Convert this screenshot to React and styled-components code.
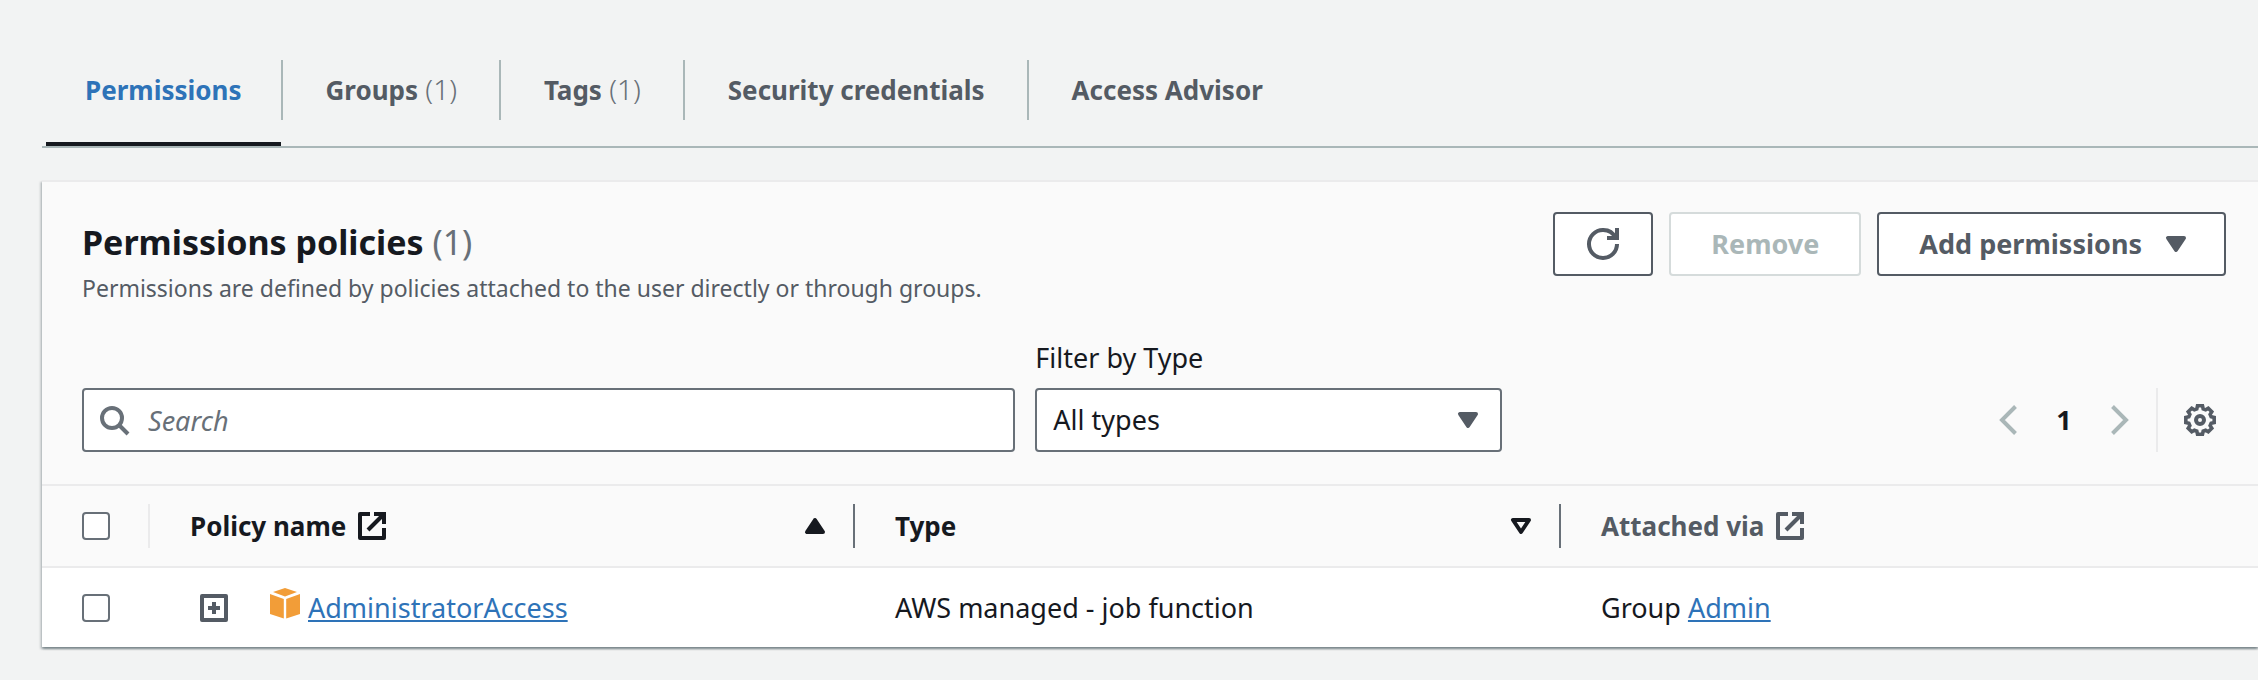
import React from "react";
import styled, { createGlobalStyle, css } from "styled-components";

const color = {
  page: "#f2f3f3",
  panel: "#fafafa",
  text: "#16191f",
  muted: "#545b64",
  subtle: "#687078",
  disabled: "#aab7b8",
  disabledBorder: "#d5dbdb",
  divider: "#ebebec",
  link: "#2e73b8",
};

const GlobalStyle = createGlobalStyle`
  *, *::before, *::after { box-sizing: border-box; }
  body {
    margin: 0;
    background: ${color.page};
    color: ${color.text};
    font-family: "Noto Sans", "Open Sans", sans-serif;
    font-size: 27px;
    line-height: 36px;
  }
  button, input, select { font: inherit; color: inherit; }
  button { cursor: pointer; }
`;

const Page = styled.main`
  padding: 60px 0 32px 42px;
`;

/* Tabs */

const TabList = styled.div`
  display: flex;
  padding-left: 4px;
  border-bottom: 2px solid ${color.disabled};
`;

const TabLabel = styled.span`
  display: block;
  padding: 12px 39px;
`;

const Tab = styled.button`
  padding: 0 0 22px;
  border: 0;
  border-bottom: 4px solid ${(p) => (p.$active ? color.text : "transparent")};
  background: none;
  color: ${(p) => (p.$active ? color.link : color.muted)};
  font-size: 26px;
  font-weight: 700;
  white-space: nowrap;

  &:not(:first-child) ${TabLabel} {
    padding: 12px 42px 12px 43px;
    border-left: 2px solid ${color.disabled};
  }
`;

const Count = styled.span`
  color: ${color.subtle};
  font-weight: 400;
`;

const TabCount = styled(Count)`
  font-size: 28px;
  font-weight: 300;
  line-height: 1;
`;

/* Panel */

const Panel = styled.section`
  margin-top: 32px;
  border-top: 2px solid ${color.divider};
  background: ${color.panel};
  box-shadow:
    0 2px 2px rgba(0, 28, 36, 0.3),
    2px 2px 2px rgba(0, 28, 36, 0.15),
    -2px 2px 2px rgba(0, 28, 36, 0.15);
`;

const PanelHeader = styled.header`
  display: flex;
  justify-content: space-between;
  align-items: flex-start;
  padding: 30px 32px 0 40px;
`;

const Title = styled.h2`
  margin: 0;
  font-size: 34px;
  line-height: 60px;
`;

const Description = styled.p`
  margin: 0;
  color: ${color.muted};
  font-size: 23px;
  line-height: 32px;
`;

const Actions = styled.div`
  display: flex;
  gap: 16px;
`;

const Button = styled.button`
  display: flex;
  align-items: center;
  justify-content: center;
  gap: 18px;
  height: 64px;
  padding: 0 ${(p) => (p.$menu ? 32 : 40)}px 0 40px;
  border: 2px solid ${color.muted};
  border-radius: 4px;
  background: #fff;
  color: ${color.muted};
  font-weight: 700;
  white-space: nowrap;

  ${(p) => p.$iconOnly && css`padding: 0 32px;`}

  &:disabled {
    border-color: ${color.disabledBorder};
    color: ${color.disabled};
    cursor: default;
  }
`;

const Toolbar = styled.div`
  display: flex;
  justify-content: space-between;
  align-items: flex-end;
  gap: 40px;
  padding: 36px 42px 32px 40px;
  border-bottom: 2px solid ${color.divider};
`;

const Filters = styled.div`
  display: grid;
  grid-template-columns: 2fr 1fr;
  align-items: end;
  gap: 20px;
  flex: 1;
  max-width: 1420px;
`;

const Field = styled.div`
  display: grid;
  gap: 12px;
`;

const ControlStack = styled.div`
  display: grid;
  align-items: center;
  color: ${(p) => p.$iconColor};

  & > * { grid-area: 1 / 1; }
  & > svg {
    justify-self: ${(p) => p.$iconSide};
    margin: 0 18px 0 16px;
    pointer-events: none;
    z-index: 1;
  }
`;

const controlBox = css`
  width: 100%;
  height: 64px;
  border: 2px solid ${color.subtle};
  border-radius: 4px;
  background: #fff;
  color: ${color.text};
`;

const SearchInput = styled.input`
  ${controlBox}
  padding: 0 16px 0 64px;

  &::placeholder {
    color: ${color.subtle};
    font-style: italic;
    opacity: 1;
  }
`;

const Select = styled.select`
  ${controlBox}
  appearance: none;
  padding: 0 60px 0 16px;
`;

const Pagination = styled.nav`
  display: flex;
  align-items: center;
  height: 64px;
`;

const IconButton = styled.button`
  display: flex;
  padding: 0;
  border: 0;
  background: none;
  color: ${color.muted};

  &:disabled { color: ${color.disabled}; cursor: default; }
`;

const PageNumber = styled.button`
  width: 80px;
  padding: 0;
  border: 0;
  background: none;
  font-weight: 700;
`;

const Preferences = styled.div`
  display: flex;
  align-items: center;
  align-self: stretch;
  margin-left: 20px;
  padding-left: 26px;
  border-left: 2px solid ${color.divider};
`;

/* Table */

const Table = styled.table`
  width: 100%;
  table-layout: fixed;
  border-collapse: collapse;
  text-align: left;
`;

const Column = styled.col`
  width: ${(p) => p.$width};
`;

const HeadCell = styled.th`
  padding: 18px 0;
  border-bottom: 2px solid ${color.divider};
  color: ${(p) => (p.$sortable ? color.text : color.muted)};
  font-size: 26px;
`;

const HeadContent = styled.div`
  display: flex;
  align-items: center;
  justify-content: space-between;
  height: 44px;
  padding: 0 22px 0 40px;
  border-right: 2px solid ${(p) => p.$edge || "transparent"};
`;

const HeadLabel = styled.span`
  display: flex;
  align-items: center;
  gap: 12px;
`;

const Cell = styled.td`
  height: 80px;
  padding: 0 20px 0 40px;
  background: #fff;
`;

const PolicyName = styled.div`
  display: flex;
  align-items: center;
  gap: 8px;
  padding-left: 10px;
`;

const ExpandButton = styled(IconButton)`
  margin-right: 34px;
`;

const Link = styled.a`
  color: ${color.link};
  text-decoration: underline;
  text-decoration-thickness: 2px;
  text-underline-offset: 2px;
  text-decoration-skip-ink: none;
`;

const Checkbox = styled.input.attrs({ type: "checkbox" })`
  appearance: none;
  display: block;
  width: 28px;
  height: 28px;
  margin: 0;
  border: 2px solid ${color.subtle};
  border-radius: 4px;
  background: #fff;

  &:checked { background: ${color.link}; }
`;

/* Icons */

const Svg = styled.svg`
  display: block;
  flex: none;
  fill: none;
  stroke: currentColor;
  stroke-width: 4;
`;

const Icon = ({ size = 32, children }) => (
  <Svg width={size} height={size} viewBox={`0 0 ${size} ${size}`} aria-hidden="true">
    {children}
  </Svg>
);

const RefreshIcon = () => (
  <Icon>
    <path d="M20 10h10V0" />
    <path d="M30 16a13.9 13.9 0 0 1-14 14 13.9 13.9 0 0 1-14-14 13.9 13.9 0 0 1 14-14 13.7 13.7 0 0 1 12.6 8" />
  </Icon>
);

const CaretDown = ({ filled }) => (
  <Icon>
    <path d="M8 10h16l-8 12z" fill={filled ? "currentColor" : "none"} strokeLinejoin="round" />
  </Icon>
);

const CaretUp = () => (
  <Icon>
    <path d="M8 22h16l-8-12z" fill="currentColor" strokeLinejoin="round" />
  </Icon>
);

const SearchIcon = () => (
  <Icon>
    <circle cx="14" cy="14" r="10" />
    <path d="M21 21l9 9" />
  </Icon>
);

const ChevronLeft = () => (
  <Icon>
    <path d="M23.5 2.5L10 16l13.5 13.5" />
  </Icon>
);

const ChevronRight = () => (
  <Icon>
    <path d="M8.5 2.5L22 16 8.5 29.5" />
  </Icon>
);

/* Eight teeth, each a flat top between two shoulders in the valleys beside it. */
const gearPoints = Array.from({ length: 8 }, (_, i) => i * 45)
  .flatMap((a) => [[a - 16, 11.6], [a - 10, 14.4], [a + 10, 14.4], [a + 16, 11.6]])
  .map(([a, r]) => {
    const t = (a * Math.PI) / 180;
    return `${(16 + r * Math.sin(t)).toFixed(2)},${(16 - r * Math.cos(t)).toFixed(2)}`;
  })
  .join(" ");

const GearIcon = () => (
  <Icon>
    <polygon points={gearPoints} strokeWidth="3.6" />
    <circle cx="16" cy="16" r="4" />
  </Icon>
);

const ExternalIcon = () => (
  <Icon size={28}>
    <path d="M12 2H2v24h24V16" strokeLinejoin="round" />
    <path d="M16 2h10v10" />
    <path d="M10 18L26 2" />
  </Icon>
);

const ExpandIcon = () => (
  <Icon size={28}>
    <rect x="2" y="2" width="24" height="24" strokeLinejoin="round" />
    <path d="M14 8v12M8 14h12" />
  </Icon>
);

const CubeIcon = () => (
  <svg width="30" height="40" viewBox="0 0 30 40" fill="#f29d38" aria-hidden="true">
    <path d="M15 0l12 4-12 4.5L3 4z" />
    <path d="M0 6l13.8 5v19.5L0 26z" />
    <path d="M30 6l-13.8 5v19.5L30 26z" />
  </svg>
);

const tabs = [
  { label: "Permissions", active: true },
  { label: "Groups", count: 1 },
  { label: "Tags", count: 1 },
  { label: "Security credentials" },
  { label: "Access Advisor" },
];

export default function App() {
  return (
    <>
      <GlobalStyle />
      <Page>
        <TabList role="tablist">
          {tabs.map(({ label, count, active }) => (
            <Tab key={label} role="tab" aria-selected={Boolean(active)} $active={active}>
              <TabLabel>
                {label}
                {count && <TabCount> ({count})</TabCount>}
              </TabLabel>
            </Tab>
          ))}
        </TabList>

        <Panel>
          <PanelHeader>
            <div>
              <Title>
                Permissions policies <Count>(1)</Count>
              </Title>
              <Description>
                Permissions are defined by policies attached to the user directly or through groups.
              </Description>
            </div>
            <Actions>
              <Button $iconOnly aria-label="Refresh">
                <RefreshIcon />
              </Button>
              <Button disabled>Remove</Button>
              <Button $menu>
                Add permissions
                <CaretDown filled />
              </Button>
            </Actions>
          </PanelHeader>

          <Toolbar>
            <Filters>
              <ControlStack $iconColor={color.subtle} $iconSide="start">
                <SearchIcon />
                <SearchInput type="search" placeholder="Search" aria-label="Search policies" />
              </ControlStack>
              <Field>
                <label htmlFor="type-filter">Filter by Type</label>
                <ControlStack $iconColor={color.muted} $iconSide="end">
                  <Select id="type-filter">
                    <option>All types</option>
                  </Select>
                  <CaretDown filled />
                </ControlStack>
              </Field>
            </Filters>
            <Pagination aria-label="Pagination">
              <IconButton disabled aria-label="Previous page">
                <ChevronLeft />
              </IconButton>
              <PageNumber aria-current="page">1</PageNumber>
              <IconButton disabled aria-label="Next page">
                <ChevronRight />
              </IconButton>
              <Preferences>
                <IconButton aria-label="Preferences">
                  <GearIcon />
                </IconButton>
              </Preferences>
            </Pagination>
          </Toolbar>

          <Table>
            <colgroup>
              <Column $width="108px" />
              <Column $width="705px" />
              <Column $width="706px" />
              <Column $width="auto" />
            </colgroup>
            <thead>
              <tr>
                <HeadCell>
                  <HeadContent $edge={color.divider}>
                    <Checkbox aria-label="Select all policies" />
                  </HeadContent>
                </HeadCell>
                <HeadCell $sortable aria-sort="ascending">
                  <HeadContent $edge={color.subtle}>
                    <HeadLabel>
                      Policy name <ExternalIcon />
                    </HeadLabel>
                    <CaretUp />
                  </HeadContent>
                </HeadCell>
                <HeadCell $sortable>
                  <HeadContent $edge={color.subtle}>
                    <HeadLabel>Type</HeadLabel>
                    <CaretDown />
                  </HeadContent>
                </HeadCell>
                <HeadCell>
                  <HeadContent>
                    <HeadLabel>
                      Attached via <ExternalIcon />
                    </HeadLabel>
                  </HeadContent>
                </HeadCell>
              </tr>
            </thead>
            <tbody>
              <tr>
                <Cell>
                  <Checkbox aria-label="Select AdministratorAccess" />
                </Cell>
                <Cell>
                  <PolicyName>
                    <ExpandButton aria-label="Expand AdministratorAccess">
                      <ExpandIcon />
                    </ExpandButton>
                    <CubeIcon />
                    <Link href="#administrator-access">AdministratorAccess</Link>
                  </PolicyName>
                </Cell>
                <Cell>AWS managed - job function</Cell>
                <Cell>
                  Group <Link href="#admin">Admin</Link>
                </Cell>
              </tr>
            </tbody>
          </Table>
        </Panel>
      </Page>
    </>
  );
}
